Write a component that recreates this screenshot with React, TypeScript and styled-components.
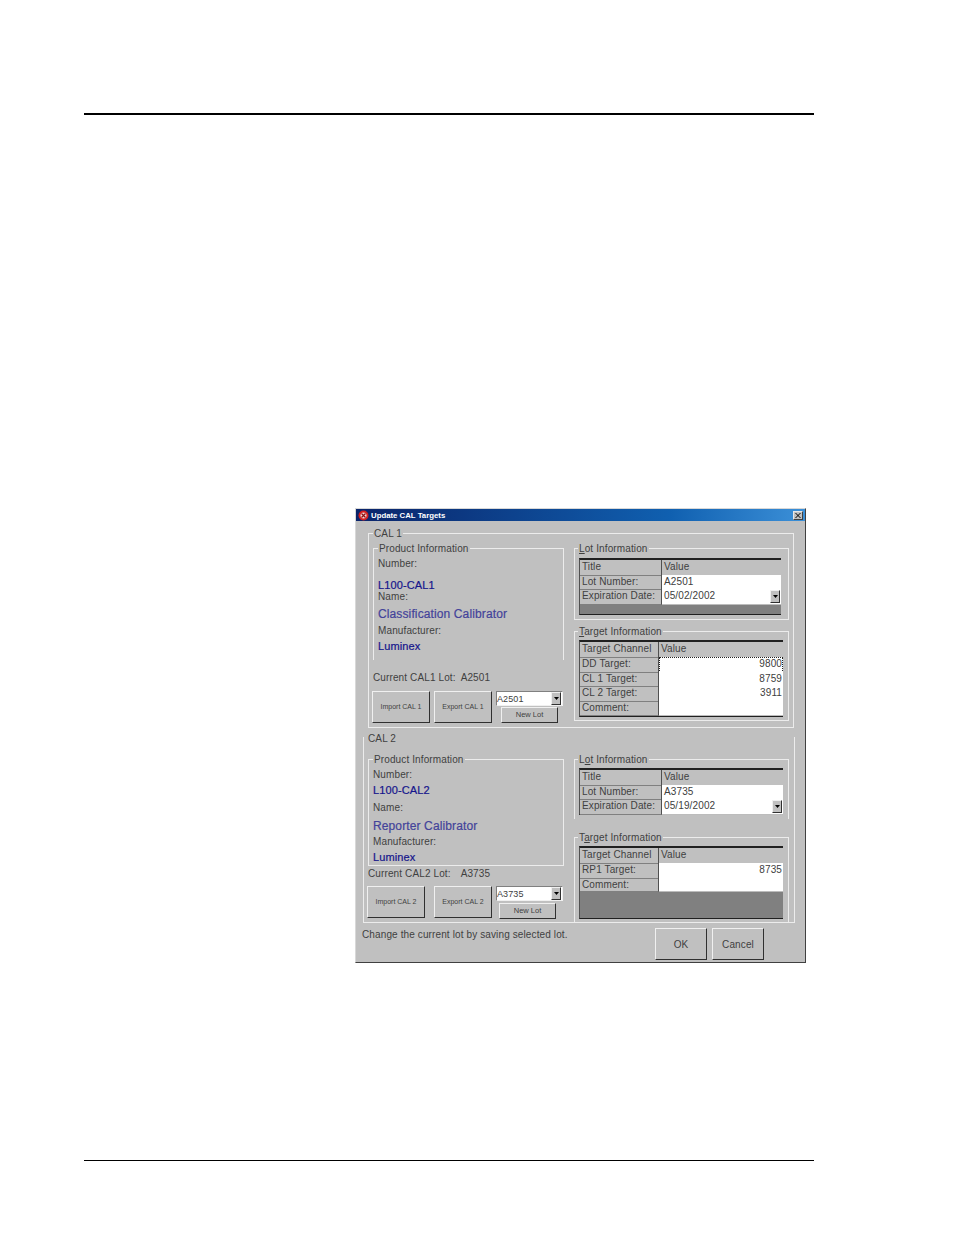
import React from "react"
import styled, { createGlobalStyle } from "styled-components"

const GlobalStyle = createGlobalStyle`
  html, body {
    margin: 0;
    padding: 0;
    background: #ffffff;
    font-family: "Liberation Sans", Arial, sans-serif;
  }
`

type TableRow = { label: string; value: string; kind?: "head" | "text" | "num" | "combo" | "focus" }

const cal1Fields = [
  { text: "Number:", top: 0 },
  { text: "L100-CAL1", top: 9, tone: "navy" },
  { text: "Name:", top: 0 },
  { text: "Classification Calibrator", top: 5, tone: "blue" },
  { text: "Manufacturer:", top: 5 },
  { text: "Luminex", top: 3, tone: "navy" },
]

const cal2Fields = [
  { text: "Number:", top: 0 },
  { text: "L100-CAL2", top: 3, tone: "navy" },
  { text: "Name:", top: 6 },
  { text: "Reporter Calibrator", top: 6, tone: "blue" },
  { text: "Manufacturer:", top: 4 },
  { text: "Luminex", top: 3, tone: "navy" },
]

const ComboArrow = () => (
  <svg width="5" height="3" viewBox="0 0 5 3">
    <path d="M0 0h5L2.5 3z" fill="#000" />
  </svg>
)

const Combo = ({ value }: { value: string }) => (
  <ComboBox>
    <span>{value}</span>
    <ArrowButton>
      <ComboArrow />
    </ArrowButton>
  </ComboBox>
)

const Fields = ({ items }: { items: typeof cal1Fields }) => (
  <>
    {items.map((f) => (
      <FieldText key={f.text} $top={f.top} $tone={f.tone}>
        {f.text}
      </FieldText>
    ))}
  </>
)

const InfoTable = ({
  split,
  rows,
  width,
  rowH,
  filler,
}: {
  split: number
  rows: TableRow[]
  width: number
  rowH: number
  filler: number
}) => (
  <Table $width={width}>
    {rows.map((r) => (
      <TableLine key={r.label} $split={split} $h={rowH}>
        <LabelCell>{r.label}</LabelCell>
        {r.kind === "head" && <HeadCell>{r.value}</HeadCell>}
        {r.kind !== "head" && (
          <ValueCell $num={r.kind === "num" || r.kind === "focus"} $focus={r.kind === "focus"}>
            {r.value}
            {r.kind === "combo" && (
              <ArrowButton>
                <ComboArrow />
              </ArrowButton>
            )}
          </ValueCell>
        )}
      </TableLine>
    ))}
    {filler > 0 && <TableFiller $h={filler} />}
  </Table>
)

const App = () => {
  return (
    <Page>
      <GlobalStyle />
      <TopRule />
      <Dialog>
        <TitleBar>
          <TitleIcon width="11" height="11" viewBox="0 0 11 11">
            <circle cx="5.5" cy="5.5" r="5" fill="#d42020" />
            <circle cx="5.5" cy="5.5" r="3" fill="#f2d8d8" />
            <path d="M3.5 3.5l4 4M7.5 3.5l-4 4" stroke="#901010" strokeWidth="1.2" />
          </TitleIcon>
          <TitleText>Update CAL Targets</TitleText>
          <CloseButton>
            <svg width="6" height="5" viewBox="0 0 6 5">
              <path d="M0.5 0l5 5M5.5 0l-5 5" stroke="#000" strokeWidth="1" />
            </svg>
          </CloseButton>
        </TitleBar>

        <CalOne>
          <Legend $left={4}>CAL 1</Legend>
          <Columns>
            <LeftColumn $w={191}>
              <ProductBox $h={112} $open>
                <Legend $left={4}>Product Information</Legend>
                <Fields items={cal1Fields} />
              </ProductBox>
              <CurrentLot $top={12}>
                <span>Current CAL1 Lot:</span>
                <LotValue $gap={5}>A2501</LotValue>
              </CurrentLot>
              <ActionRow $top={7}>
                <BigButton $left={-1}>Import CAL 1</BigButton>
                <BigButton $left={4}>Export CAL 1</BigButton>
                <ComboStack>
                  <Combo value="A2501" />
                  <NewLot $left={5} $top={1}>
                    New Lot
                  </NewLot>
                </ComboStack>
              </ActionRow>
            </LeftColumn>
            <RightColumn>
              <InfoBox $h={72} $pad={9}>
                <Legend $left={3}>
                  <u>L</u>ot Information
                </Legend>
                <InfoTable
                  split={82}
                  width={202}
                  rowH={14.5}
                  filler={10}
                  rows={[
                    { label: "Title", value: "Value", kind: "head" },
                    { label: "Lot Number:", value: "A2501" },
                    { label: "Expiration Date:", value: "05/02/2002", kind: "combo" },
                  ]}
                />
              </InfoBox>
              <InfoBox $h={90} $top={11} $pad={8}>
                <Legend $left={3}>
                  <u>T</u>arget Information
                </Legend>
                <InfoTable
                  split={79}
                  width={204}
                  rowH={14.8}
                  filler={0}
                  rows={[
                    { label: "Target Channel", value: "Value", kind: "head" },
                    { label: "DD Target:", value: "9800", kind: "focus" },
                    { label: "CL 1 Target:", value: "8759", kind: "num" },
                    { label: "CL 2 Target:", value: "3911", kind: "num" },
                    { label: "Comment:", value: "" },
                  ]}
                />
              </InfoBox>
            </RightColumn>
          </Columns>
        </CalOne>

        <CalTwo>
          <Legend $left={3} $plain>
            CAL 2
          </Legend>
          <Columns>
            <LeftColumn $w={196}>
              <ProductBox $h={107}>
                <Legend $left={4}>Product Information</Legend>
                <Fields items={cal2Fields} />
              </ProductBox>
              <CurrentLot $top={2}>
                <span>Current CAL2 Lot:</span>
                <LotValue $gap={10}>A3735</LotValue>
              </CurrentLot>
              <ActionRow $top={6}>
                <BigButton $left={-1}>Import CAL 2</BigButton>
                <BigButton $left={9}>Export CAL 2</BigButton>
                <ComboStack>
                  <Combo value="A3735" />
                  <NewLot $left={3} $top={2}>
                    New Lot
                  </NewLot>
                </ComboStack>
              </ActionRow>
            </LeftColumn>
            <RightColumn>
              <InfoBox $h={60} $open $pad={8}>
                <Legend $left={3}>
                  L<u>o</u>t Information
                </Legend>
                <InfoTable
                  split={82}
                  width={204}
                  rowH={14.5}
                  filler={0}
                  rows={[
                    { label: "Title", value: "Value", kind: "head" },
                    { label: "Lot Number:", value: "A3735" },
                    { label: "Expiration Date:", value: "05/19/2002", kind: "combo" },
                  ]}
                />
              </InfoBox>
              <InfoBox $h={85} $top={18} $open $pad={8}>
                <Legend $left={3}>
                  T<u>a</u>rget Information
                </Legend>
                <InfoTable
                  split={79}
                  width={204}
                  rowH={14.8}
                  filler={26}
                  rows={[
                    { label: "Target Channel", value: "Value", kind: "head" },
                    { label: "RP1 Target:", value: "8735", kind: "num" },
                    { label: "Comment:", value: "" },
                  ]}
                />
              </InfoBox>
            </RightColumn>
          </Columns>
        </CalTwo>

        <Footer>
          <StatusText>Change the current lot by saving selected lot.</StatusText>
          <DialogButton $left={0}>OK</DialogButton>
          <DialogButton $left={5}>Cancel</DialogButton>
        </Footer>
      </Dialog>
      <BottomRule />
    </Page>
  )
}
export default App

const Page = styled.div`
  width: 954px;
  height: 1235px;
  padding: 113px 0 0 84px;
  box-sizing: border-box;
  overflow: hidden;
`
const TopRule = styled.div`
  width: 730px;
  height: 2px;
  background: #000;
`
const BottomRule = styled.div`
  width: 730px;
  height: 1px;
  margin-top: 197px;
  background: #000;
`
const Dialog = styled.div`
  width: 451px;
  height: 455px;
  margin: 393px 0 0 271px;
  box-sizing: border-box;
  background: #c0c0c0;
  border: 1px solid #404040;
  border-top-color: #d8d8d8;
  border-left-color: #d8d8d8;
  color: #404040;
  font-size: 10px;
  letter-spacing: 0.12px;
`
const TitleBar = styled.div`
  height: 12px;
  display: flex;
  align-items: center;
  padding: 0 2px;
  background: linear-gradient(90deg, #0a246a 0%, #1060b0 70%, #3c90d8 100%);
`
const TitleIcon = styled.svg`
  flex: none;
`
const TitleText = styled.span`
  margin-left: 2px;
  color: #fff;
  font-size: 7.8px;
  font-weight: 700;
  letter-spacing: 0;
  flex: 1;
`
const CloseButton = styled.div`
  width: 10px;
  height: 9px;
  display: flex;
  align-items: center;
  justify-content: center;
  background: #c0c0c0;
  border: 1px solid #e8e8e8;
  border-right-color: #404040;
  border-bottom-color: #404040;
  box-sizing: border-box;
`
const Legend = styled.div<{ $left: number; $plain?: boolean }>`
  position: absolute;
  top: ${(p) => (p.$plain ? -4 : -6)}px;
  left: ${(p) => p.$left}px;
  padding: 0 1px;
  background: #c0c0c0;
  line-height: 12px;
  font-size: 10px;
  white-space: nowrap;
  u {
    text-decoration: underline;
  }
`
const CalOne = styled.div`
  position: relative;
  width: 426px;
  height: 195px;
  margin: 12px 0 0 12px;
  box-sizing: border-box;
  padding: 14px 4px 0 4px;
  border: 1px solid #ececec;
`
const CalTwo = styled.div`
  position: relative;
  width: 432px;
  height: 186px;
  margin: 9px 0 0 7px;
  box-sizing: border-box;
  padding: 22px 0 0 4px;
  border: 1px solid #ececec;
  border-top: none;
`
const Columns = styled.div`
  display: flex;
`
const LeftColumn = styled.div<{ $w: number }>`
  width: ${(p) => p.$w}px;
  flex: none;
`
const RightColumn = styled.div`
  width: 215px;
  margin-left: 10px;
  flex: none;
`
const ProductBox = styled.div<{ $h: number; $open?: boolean }>`
  position: relative;
  height: ${(p) => p.$h}px;
  box-sizing: border-box;
  padding: 9px 0 0 4px;
  border: 1px solid #ececec;
  ${(p) => (p.$open ? "border-bottom: none;" : "")}
`
const FieldText = styled.div<{ $top: number; $tone?: string }>`
  height: 12px;
  line-height: 12px;
  margin-top: ${(p) => p.$top}px;
  white-space: nowrap;
  font-size: ${(p) => (p.$tone === "blue" ? 12 : p.$tone === "navy" ? 11 : 10)}px;
  color: ${(p) => (p.$tone === "blue" ? "#43439a" : p.$tone === "navy" ? "#14148c" : "#404040")};
  ${(p) => (p.$tone ? "-webkit-text-stroke: 0.2px currentColor;" : "")}
`
const CurrentLot = styled.div<{ $top: number }>`
  height: 12px;
  line-height: 12px;
  margin-top: ${(p) => p.$top}px;
  white-space: nowrap;
  display: flex;
`
const LotValue = styled.span<{ $gap: number }>`
  margin-left: ${(p) => p.$gap}px;
`
const ActionRow = styled.div<{ $top: number }>`
  display: flex;
  margin-top: ${(p) => p.$top}px;
`
const raised = `
  box-sizing: border-box;
  display: flex;
  align-items: center;
  justify-content: center;
  background: #c0c0c0;
  border: 1px solid #f0f0f0;
  border-right-color: #303030;
  border-bottom-color: #303030;
`
const BigButton = styled.div<{ $left: number }>`
  ${raised}
  width: 58px;
  height: 32px;
  flex: none;
  padding-bottom: 1px;
  margin-left: ${(p) => p.$left}px;
  font-size: 7px;
  letter-spacing: 0;
`
const ComboStack = styled.div`
  width: 67px;
  margin-left: 4px;
  flex: none;
`
const ComboBox = styled.div`
  height: 15px;
  box-sizing: border-box;
  display: flex;
  align-items: center;
  justify-content: space-between;
  padding: 0 1px 0 0;
  background: #fff;
  border: 1px solid #808080;
  border-right-color: #f0f0f0;
  border-bottom-color: #f0f0f0;
  font-size: 9px;
`
const ArrowButton = styled.div`
  ${raised}
  width: 10px;
  height: 13px;
  flex: none;
`
const NewLot = styled.div<{ $left: number; $top: number }>`
  ${raised}
  width: 57px;
  height: 16px;
  padding-bottom: 1px;
  margin: ${(p) => p.$top}px 0 0 ${(p) => p.$left}px;
  font-size: 7.5px;
  letter-spacing: 0;
`
const InfoBox = styled.div<{ $h: number; $top?: number; $open?: boolean; $pad: number }>`
  position: relative;
  height: ${(p) => p.$h}px;
  margin-top: ${(p) => p.$top ?? 0}px;
  box-sizing: border-box;
  padding: ${(p) => p.$pad}px 0 0 4px;
  border: 1px solid #ececec;
  ${(p) => (p.$open ? "border-bottom: none;" : "")}
`
const Table = styled.div<{ $width: number }>`
  width: ${(p) => p.$width}px;
  box-sizing: border-box;
  border-top: 2px solid #202020;
  border-left: 1px solid #505050;
  border-bottom: 1px solid #202020;
`
const TableLine = styled.div<{ $split: number; $h: number }>`
  display: grid;
  grid-template-columns: ${(p) => p.$split}px 1fr;
  height: ${(p) => p.$h}px;
  line-height: ${(p) => p.$h}px;
  font-size: 10px;
`
const LabelCell = styled.div`
  padding-left: 2px;
  white-space: nowrap;
  overflow: hidden;
  border-right: 1px solid #505050;
  border-bottom: 1px solid #808080;
`
const HeadCell = styled.div`
  padding-left: 2px;
  border-bottom: 1px solid #808080;
`
const ValueCell = styled.div<{ $num?: boolean; $focus?: boolean }>`
  display: flex;
  align-items: center;
  justify-content: ${(p) => (p.$num ? "flex-end" : "space-between")};
  box-sizing: border-box;
  height: 100%;
  padding: 0 1px 0 2px;
  background: #fff;
  border-bottom: 1px solid #bcbcbc;
  ${(p) => (p.$focus ? "outline: 1px dotted #202020; outline-offset: -1px;" : "")}
`
const TableFiller = styled.div<{ $h: number }>`
  height: ${(p) => p.$h}px;
  background: #808080;
`
const Footer = styled.div`
  display: flex;
  align-items: flex-start;
  margin: 5px 0 0 6px;
  padding-right: 41px;
`
const StatusText = styled.div`
  flex: 1;
  margin-top: 1px;
  line-height: 12px;
  white-space: nowrap;
`
const DialogButton = styled.div<{ $left: number }>`
  ${raised}
  width: 52px;
  height: 32px;
  flex: none;
  margin-left: ${(p) => p.$left}px;
`
